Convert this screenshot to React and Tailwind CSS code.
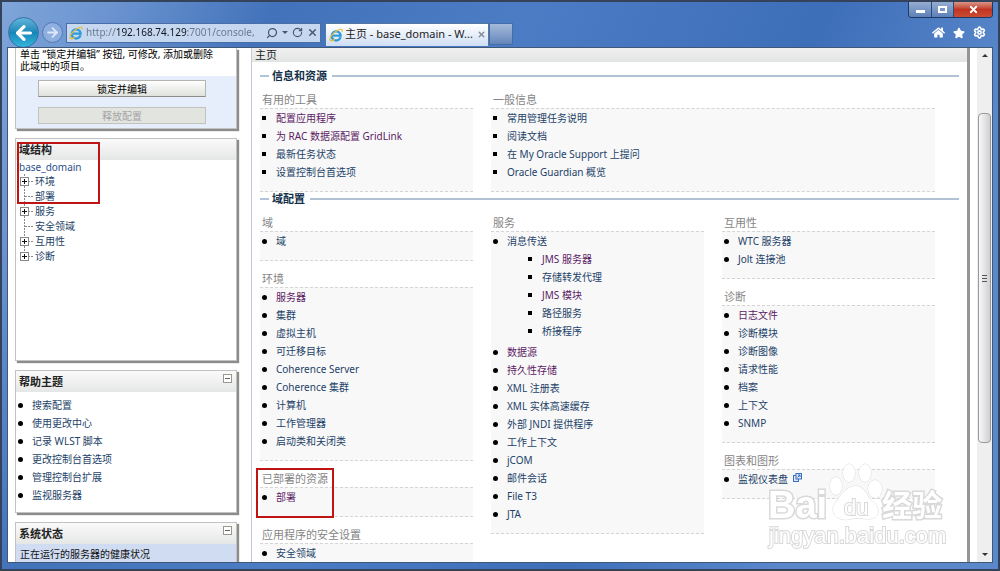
import { FaHome, FaStar } from "react-icons/fa";
import { ArrowLeft, ArrowRight, RotateCw, Search, Settings, X } from "lucide-react";

const tools = [
  { text: "配置应用程序", visited: true },
  { text: "为 RAC 数据源配置 GridLink", visited: true },
  { text: "最新任务状态" },
  { text: "设置控制台首选项" },
];

const general = [
  { text: "常用管理任务说明" },
  { text: "阅读文档" },
  { text: "在 My Oracle Support 上提问" },
  { text: "Oracle Guardian 概览" },
];

const environment = [
  { text: "服务器", visited: true },
  { text: "集群" },
  { text: "虚拟主机" },
  { text: "可迁移目标" },
  { text: "Coherence Server" },
  { text: "Coherence 集群" },
  { text: "计算机" },
  { text: "工作管理器" },
  { text: "启动类和关闭类" },
];

const services = [
  {
    text: "消息传送",
    children: [
      { text: "JMS 服务器", visited: true },
      { text: "存储转发代理" },
      { text: "JMS 模块", visited: true },
      { text: "路径服务" },
      { text: "桥接程序" },
    ],
  },
  { text: "数据源", visited: true },
  { text: "持久性存储", visited: true },
  { text: "XML 注册表" },
  { text: "XML 实体高速缓存" },
  { text: "外部 JNDI 提供程序" },
  { text: "工作上下文" },
  { text: "jCOM" },
  { text: "邮件会话" },
  { text: "File T3" },
  { text: "JTA" },
];

const diagnostics = [
  { text: "日志文件", visited: true },
  { text: "诊断模块" },
  { text: "诊断图像" },
  { text: "请求性能" },
  { text: "档案" },
  { text: "上下文" },
  { text: "SNMP" },
];

const helpTopics = [
  { text: "搜索配置" },
  { text: "使用更改中心" },
  { text: "记录 WLST 脚本" },
  { text: "更改控制台首选项" },
  { text: "管理控制台扩展" },
  { text: "监视服务器" },
];

const tree = [
  { text: "环境", expandable: true },
  { text: "部署" },
  { text: "服务", expandable: true },
  { text: "安全领域" },
  { text: "互用性", expandable: true },
  { text: "诊断", expandable: true, last: true },
];

function LinkList({ items, square }) {
  return (
    <ul>
      {items.map((item) => (
        <li key={item.text}>
          <div className="flex h-[18px] items-center gap-[9px] pl-[2px]">
            <span className={square ? "size-1 mr-px bg-black" : "size-[5px] rounded-full bg-black"} />
            <a
              href="#"
              className={item.visited ? "whitespace-nowrap text-[#5c1b66]" : "whitespace-nowrap text-[#1d4268]"}
            >
              {item.text}
            </a>
            {item.popup && (
              <svg viewBox="0 0 9 9" className="-ml-1 mb-1 size-[9px]" fill="#dbe7fa" stroke="#3c6fc0">
                <rect x="0.5" y="2.5" width="5" height="6" />
                <rect x="3" y="0.5" width="5.5" height="5.5" />
                <path d="M4.5 4.5l2.5-2.5M5 2h2v2" fill="none" />
              </svg>
            )}
          </div>
          {item.children && (
            <div className="mb-[3px] pl-[35px]">
              <LinkList items={item.children} square />
            </div>
          )}
        </li>
      ))}
    </ul>
  );
}

function Group({ title, items, square, className }) {
  return (
    <section className={className}>
      <h3 className="h-4 pl-[2px] text-[11px] leading-4 text-[#858585]">{title}</h3>
      <div className="border-y border-dashed border-[#d5d5d5] bg-[#f8f8f8] pb-[10px]">
        <LinkList items={items} square={square} />
      </div>
    </section>
  );
}

function SectionTitle({ children }) {
  return (
    <div className="mb-[9px] mr-2 flex h-[14px] items-center">
      <span className="h-[2px] w-[9px] bg-[#b0c6dc]" />
      <h2 className="mx-[3px] text-[11px] font-bold leading-[14px] text-[#12304a]">{children}</h2>
      <span className="ml-[2px] h-[2px] flex-1 bg-[#b0c2d3]" />
    </div>
  );
}

function Panel({ title, collapsible, className, children }) {
  return (
    <section className={`border border-[#c2c2c2] bg-white shadow-[2px_2px_1px_#8c8c8c] ${className}`}>
      <header className="flex h-[21px] justify-between bg-gradient-to-b from-[#fafafa] to-[#e5e7e6] pl-[3px]">
        <h2 className="text-[11px] font-bold leading-[22px] text-[#222]">{title}</h2>
        {collapsible && (
          <button aria-label="折叠" className="mr-1 mt-[3px] flex size-[9px] items-center justify-center border border-[#9a9a8c] bg-white">
            <span className="h-px w-[5px] bg-[#666]" />
          </button>
        )}
      </header>
      {children}
    </section>
  );
}

function TreeNode({ expandable, last }) {
  return (
    <svg viewBox="0 0 15 15" className="h-[15px] w-[15px]" fill="none" stroke="#888" shapeRendering="crispEdges">
      <path d={last ? "M5.5 0V7" : "M5.5 0V15"} strokeDasharray="2 1" />
      <path d="M6 7.5H15" strokeDasharray="2 1" />
      {expandable && (
        <>
          <rect x="1.5" y="3.5" width="8" height="8" fill="#fff" />
          <path d="M3 7.5H8M5.5 5V10" stroke="#111" />
        </>
      )}
    </svg>
  );
}

function IeLogo() {
  return (
    <svg viewBox="0 0 16 16" className="size-[14px] shrink-0" fill="none">
      <path d="M13.2 10.5A5.2 5.2 0 1 1 13.2 7.6L13.3 8.7H4.5" stroke="#2f9bd8" strokeWidth="2.6" />
      <path d="M1.5 14.3C-.5 12 4 5.5 10 2.5 13.5.8 16 1 14.8 4.2" stroke="#e8bd3c" strokeWidth="1.4" />
      <path d="M1.5 14.3C2.5 15.2 4.6 14.3 6.5 13" stroke="#e8bd3c" strokeWidth="1.4" />
    </svg>
  );
}

function BrowserBar() {
  return (
    <header className="flex h-[45px] items-start">
      <nav className="flex flex-1 items-center pt-[15px]">
        <button
          aria-label="后退"
          className="-mr-px ml-px flex size-[31px] items-center justify-center rounded-full border border-[#3b6ea6] bg-gradient-to-b from-[#5fb6dc] via-[#1787b8] to-[#35b6dc] text-white"
        >
          <ArrowLeft size={22} strokeWidth={3.5} />
        </button>
        <button
          aria-label="前进"
          className="ml-1 flex size-[21px] items-center justify-center rounded-full border border-[#5578ad] bg-[#8eafe0] text-[#dce8f8]"
        >
          <ArrowRight size={15} strokeWidth={3} />
        </button>
        <div className="ml-[3px] flex h-5 w-[255px] items-center border border-[#4a6fa8] bg-[#c6d7f0] pl-[2px] pr-[2px] text-[#46566e]">
          <IeLogo />
          <input
            aria-label="地址"
            defaultValue="http://192.168.74.129:7001/console,"
            className="ml-[3px] min-w-0 flex-1 bg-[linear-gradient(90deg,#66758d_30px,#10151d_30px,#10151d_102px,#66758d_102px)] bg-clip-text text-[10px] text-transparent outline-none"
          />
          <button aria-label="搜索" className="ml-[2px]">
            <Search size={12} strokeWidth={2.5} className="-scale-x-100" />
          </button>
          <button aria-label="更多" className="mx-1 border-x-[3px] border-t-[3px] border-x-transparent border-t-[#46566e]" />
          <button aria-label="刷新" className="mr-1">
            <RotateCw size={11} strokeWidth={2.5} />
          </button>
          <button aria-label="停止">
            <X size={11} strokeWidth={3} />
          </button>
        </div>
        <div className="ml-1 mt-[3px] flex h-[23px] w-[164px] items-center border border-b-0 border-[#56779f] bg-gradient-to-b from-white to-[#cfdef4] pl-[3px] pr-[2px]">
          <IeLogo />
          <span className="ml-[2px] flex-1 whitespace-nowrap text-[11px] text-[#222]">主页 - base_domain - W...</span>
          <button aria-label="关闭标签" className="text-[#828da0]">
            <X size={9} strokeWidth={4} />
          </button>
        </div>
        <button aria-label="新标签" className="mt-[2px] h-[22px] w-6 border border-[#456da8] bg-gradient-to-b from-[#a5bad9] to-[#6586bb]" />
      </nav>
      <div className="flex flex-col items-end">
        <div className="flex h-4 overflow-hidden rounded-b-sm border border-t-0 border-[#1d3a66] text-white">
          <button aria-label="最小化" className="flex w-[23px] justify-center border-r border-[#2a4a7c] bg-gradient-to-b from-[#96add1] to-[#5d80b8] pt-2">
            <span className="h-[3px] w-[9px] bg-white" />
          </button>
          <button aria-label="最大化" className="flex w-[22px] items-center justify-center border-r border-[#2a4a7c] bg-gradient-to-b from-[#96add1] to-[#5d80b8]">
            <span className="h-[7px] w-[9px] border-2 border-white" />
          </button>
          <button aria-label="关闭" className="flex w-[38px] items-center justify-center bg-gradient-to-b from-[#d99488] via-[#c03522] to-[#cc4b31]">
            <X size={11} strokeWidth={4} />
          </button>
        </div>
        <div className="flex items-center gap-2 pr-[7px] pt-2 text-white">
          <button aria-label="主页"><FaHome size={13} /></button>
          <button aria-label="收藏夹"><FaStar size={12} /></button>
          <button aria-label="工具"><Settings size={13} strokeWidth={3} /></button>
        </div>
      </div>
    </header>
  );
}

function Watermark() {
  return (
    <svg viewBox="0 0 184 92" className="w-[184px]" fill="#fff" stroke="#d9d9d9">
      <g fontFamily="'Liberation Sans', sans-serif" paintOrder="stroke">
        <text x="3" y="57" fontSize="38" fontWeight="700" strokeWidth="3">Bai</text>
        <ellipse cx="71" cy="25" rx="6" ry="9" />
        <ellipse cx="84" cy="12" rx="6" ry="9" />
        <ellipse cx="100" cy="12" rx="6" ry="9" />
        <ellipse cx="110" cy="28" rx="7" ry="9" />
        <path d="M91 25C99 25 101 34 107 40C117 47 114 58 104 58C97 58 93 56 86 58C73 61 65 53 69 44C74 36 81 25 91 25Z" />
        <text x="79" y="54" fontSize="22" strokeWidth="2">du</text>
        <text x="4" y="82" fontSize="22" strokeWidth="2">jingyan.baidu.com</text>
      </g>
      <text x="117" y="55" fontFamily="'Noto Sans CJK SC', sans-serif" fontSize="30" fontWeight="700" strokeWidth="3" paintOrder="stroke">经验</text>
    </svg>
  );
}

export default function App() {
  return (
    <div className="flex h-screen bg-[#35435a] p-[2px] font-['Noto_Sans','Noto_Sans_CJK_SC',sans-serif] text-[10px]">
      <div className="flex min-w-0 flex-1 flex-col bg-[linear-gradient(115deg,#7fa5d9_0px,#6b94d0_100px,#4272ba_250px,#4c7cc4_480px,#3d6eb8_750px,#5b88cb_950px)] px-[5px] pb-[6px]">
        <BrowserBar />

        <div className="flex min-h-0 flex-1 overflow-hidden border border-[#3f5878] bg-white">
          <aside className="ml-[7px] flex w-[222px] shrink-0 flex-col">
            <section className="h-[81px] shrink-0 border border-t-0 border-[#c2c2c2] bg-[#e6eefb] shadow-[2px_2px_1px_#8c8c8c]">
              <p className="h-7 bg-white pl-1 pr-5 leading-3 text-black">
                单击 “锁定并编辑” 按钮, 可修改, 添加或删除此域中的项目。
              </p>
              <div className="flex flex-col gap-[10px] pl-[22px] pr-[30px] pt-1">
                <button className="h-[17px] border border-[#b5b5b0] border-b-[#8c8c88] bg-gradient-to-b from-white to-[#dfe2dc] leading-3">
                  锁定并编辑
                </button>
                <button disabled className="h-[17px] border border-[#c2c2be] bg-[#e2e4e0] leading-3 text-[#a5a5a5]">
                  释放配置
                </button>
              </div>
            </section>

            <div className="relative mt-[9px] shrink-0">
              <Panel title="域结构" className="h-[223px]">
                <div className="pl-[3px] leading-[15px]">
                  <a href="#" className="block text-[#2c5189]">base_domain</a>
                  <ul className="-mt-px">
                    {tree.map((node) => (
                      <li key={node.text} className="flex h-[15px] items-center gap-px">
                        <TreeNode expandable={node.expandable} last={node.last} />
                        <a href="#" className="text-[#1d4268]">{node.text}</a>
                      </li>
                    ))}
                  </ul>
                </div>
              </Panel>
              <div className="pointer-events-none absolute left-[2px] top-1 h-[62px] w-[83px] border-2 border-[#bf1414]" />
            </div>

            <Panel title="帮助主题" collapsible className="mt-[9px] h-[143px] shrink-0">
              <div className="pt-1">
                <LinkList items={helpTopics} />
              </div>
            </Panel>

            <Panel title="系统状态" collapsible className="mt-[9px] shrink-0">
              <p className="h-10 bg-[#d0dcf1] pl-1 leading-5 text-[#111]">正在运行的服务器的健康状况</p>
            </Panel>
          </aside>

          <main className="ml-[14px] min-w-0 flex-1 overflow-hidden border-l border-r-[3px] border-l-[#bfc9d8] border-r-[#969696]">
            <h1 className="h-[14px] bg-gradient-to-b from-[#f0f0f0] to-[#e3e5e4] pl-[3px] text-[11px] leading-[14px] text-[#222]">主页</h1>
            <div className="pl-2 pt-[7px]">
              <SectionTitle>信息和资源</SectionTitle>
              <div className="mr-8 grid grid-cols-3 gap-x-[18px]">
                <Group title="有用的工具" items={tools} square />
                <Group title="一般信息" items={general} square className="col-span-2" />
              </div>

              <SectionTitle>域配置</SectionTitle>
              <div className="mr-8 grid grid-cols-3 items-start gap-x-[18px]">
                <div className="flex flex-col gap-[10px]">
                  <Group title="域" items={[{ text: "域" }]} />
                  <Group title="环境" items={environment} />
                  <div className="relative">
                    <Group title="已部署的资源" items={[{ text: "部署", visited: true }]} />
                    <div className="pointer-events-none absolute -left-1 -top-[3px] h-[50px] w-[78px] border-2 border-[#bf1414]" />
                  </div>
                  <Group title="应用程序的安全设置" items={[{ text: "安全领域" }]} />
                </div>
                <Group title="服务" items={services} />
                <div className="flex flex-col gap-[10px]">
                  <Group title="互用性" items={[{ text: "WTC 服务器" }, { text: "Jolt 连接池" }]} />
                  <Group title="诊断" items={diagnostics} />
                  <Group title="图表和图形" items={[{ text: "监视仪表盘", popup: true }]} />
                </div>
              </div>
            </div>
          </main>

          <div className="ml-[7px] flex w-[15px] shrink-0 flex-col items-center bg-[#efefef]">
            <span className="mt-[6px] border-x-[3px] border-b-[3px] border-x-transparent border-b-[#333]" />
            <div className="mt-14 flex h-[330px] w-[13px] flex-col items-center justify-center gap-[2px] rounded-sm border border-[#999] bg-gradient-to-r from-[#f8f8f8] to-[#cfd0d3]">
              <span className="h-px w-[5px] bg-[#555]" />
              <span className="h-px w-[5px] bg-[#555]" />
              <span className="h-px w-[5px] bg-[#555]" />
            </div>
            <span className="mb-[6px] mt-auto border-x-[3px] border-t-[3px] border-x-transparent border-t-[#333]" />
          </div>
        </div>
      </div>
      <div className="pointer-events-none fixed bottom-[18px] right-[51px]">
        <Watermark />
      </div>
    </div>
  );
}
